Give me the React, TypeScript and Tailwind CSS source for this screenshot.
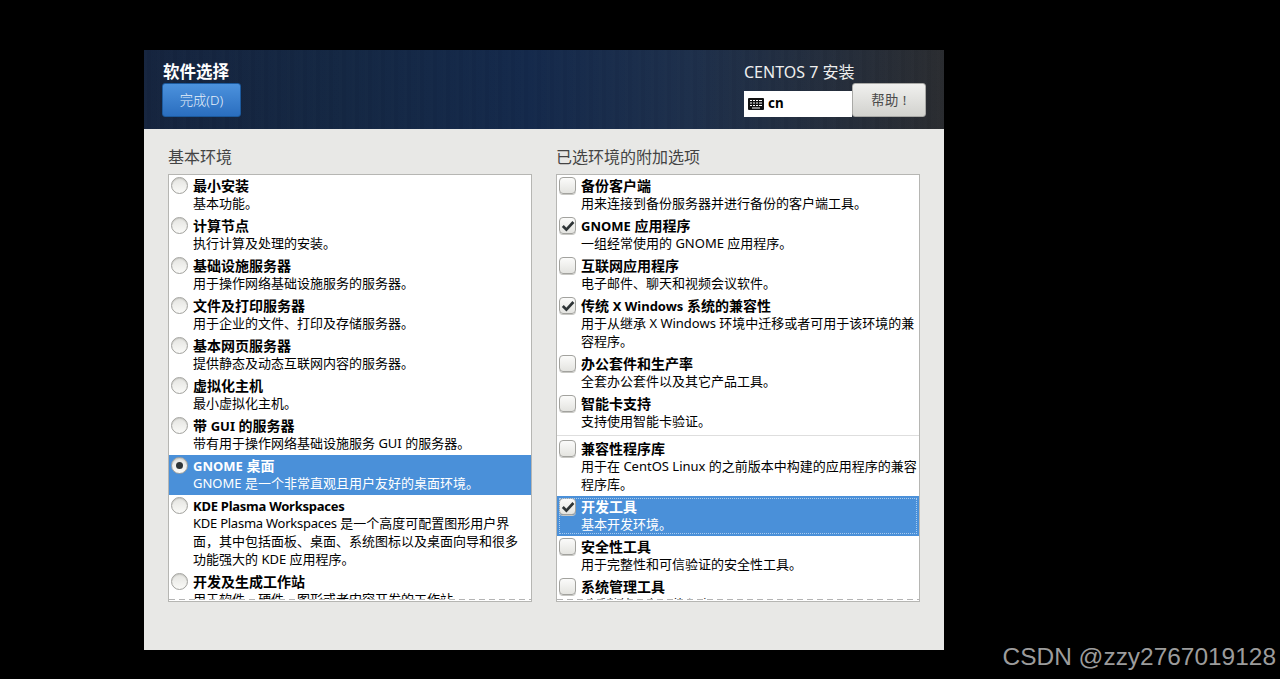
import React from "react";

const FONT = "font-['Noto_Sans','Noto_Sans_CJK_SC',sans-serif]";

type Row = { title: string; desc: string; checked?: boolean; selected?: boolean; focus?: boolean };

const envs: Row[] = [
  { title: "最小安装", desc: "基本功能。" },
  { title: "计算节点", desc: "执行计算及处理的安装。" },
  { title: "基础设施服务器", desc: "用于操作网络基础设施服务的服务器。" },
  { title: "文件及打印服务器", desc: "用于企业的文件、打印及存储服务器。" },
  { title: "基本网页服务器", desc: "提供静态及动态互联网内容的服务器。" },
  { title: "虚拟化主机", desc: "最小虚拟化主机。" },
  { title: "带 GUI 的服务器", desc: "带有用于操作网络基础设施服务 GUI 的服务器。" },
  { title: "GNOME 桌面", desc: "GNOME 是一个非常直观且用户友好的桌面环境。", checked: true, selected: true },
  { title: "KDE Plasma Workspaces", desc: "KDE Plasma Workspaces 是一个高度可配置图形用户界\n面，其中包括面板、桌面、系统图标以及桌面向导和很多\n功能强大的 KDE 应用程序。" },
  { title: "开发及生成工作站", desc: "用于软件、硬件、图形或者内容开发的工作站。" },
];

const addonsTop: Row[] = [
  { title: "备份客户端", desc: "用来连接到备份服务器并进行备份的客户端工具。" },
  { title: "GNOME 应用程序", desc: "一组经常使用的 GNOME 应用程序。", checked: true },
  { title: "互联网应用程序", desc: "电子邮件、聊天和视频会议软件。" },
  { title: "传统 X Windows 系统的兼容性", desc: "用于从继承 X Windows 环境中迁移或者可用于该环境的兼\n容程序。", checked: true },
  { title: "办公套件和生产率", desc: "全套办公套件以及其它产品工具。" },
  { title: "智能卡支持", desc: "支持使用智能卡验证。" },
];

const addonsBottom: Row[] = [
  { title: "兼容性程序库", desc: "用于在 CentOS Linux 的之前版本中构建的应用程序的兼容\n程序库。" },
  { title: "开发工具", desc: "基本开发环境。", checked: true, selected: true, focus: true },
  { title: "安全性工具", desc: "用于完整性和可信验证的安全性工具。" },
  { title: "系统管理工具", desc: "对系统管理有用的程序。" },
];

function Mixed({ text, heading }: { text: string; heading?: boolean }) {
  const parts = text.split(/([A-Za-z][A-Za-z ]*[A-Za-z]|[A-Z])/);
  return (
    <>
      {parts.map((part, i) => {
        if (i % 2 === 0) return part;
        const wide = part.includes("Plasma");
        const cls = heading
          ? wide
            ? "text-[13px] leading-none tracking-[-0.25px]"
            : "text-[13px] leading-none"
          : wide
            ? "text-[13px] leading-none tracking-[-0.25px]"
            : "text-[13px] leading-none";
        return (
          <span key={i} className={cls}>
            {part}
          </span>
        );
      })}
    </>
  );
}

function Radio({ on }: { on?: boolean }) {
  return (
    <span className="flex h-[17px] w-[17px] shrink-0 items-center justify-center rounded-full border border-[#a2a29e] bg-gradient-to-b from-[#e4e4e0] to-[#fafaf8] shadow-[inset_0_1px_1px_#c8c8c4]">
      {on && <span className="h-[7px] w-[7px] rounded-full bg-[#2e3436]" />}
    </span>
  );
}

function Check({ on }: { on?: boolean }) {
  return (
    <span className="flex h-[17px] w-[17px] shrink-0 items-center justify-center rounded-[4px] border border-[#a2a29e] bg-gradient-to-b from-[#fbfbfa] to-[#e4e4e0] shadow-[0_1px_0_#c8c8c4]">
      {on && (
        <svg viewBox="0 0 14 14" className="h-[14px] w-[14px]">
          <path d="M1.8 7 L5.4 10.6 L12.4 3" fill="none" stroke="#2e3436" strokeWidth="2.7" />
        </svg>
      )}
    </span>
  );
}

function ListRow({ row, kind }: { row: Row; kind: "radio" | "check" }) {
  const tone = row.selected ? "bg-[#4a90d9] text-white" : "text-black";
  return (
    <div className={`relative flex shrink-0 gap-[5px] pb-[3px] pl-[2px] pr-[2px] pt-[2px] leading-[18px] ${tone}`}>
      {kind === "radio" ? <Radio on={row.checked} /> : <Check on={row.checked} />}
      <div className="min-w-0 flex-1">
        <div className="text-[14px] font-bold leading-[17px]">
          <Mixed text={row.title} heading />
        </div>
        <div className="whitespace-pre">
          <Mixed text={row.desc} />
        </div>
      </div>
      {row.focus && (
        <span className="pointer-events-none absolute inset-[2px] border border-dotted border-[#a9cbee]" />
      )}
    </div>
  );
}

function ListBox({ children }: { children: React.ReactNode }) {
  return (
    <div className="relative flex h-[428px] flex-col overflow-hidden border border-[#b6b6b3] bg-white text-[13px]">
      {children}
      <span className="absolute inset-x-0 bottom-0 h-[2px] bg-white" />
      <span className="absolute inset-x-0 bottom-[1px] h-px bg-[repeating-linear-gradient(90deg,#b4b4b4_0,#b4b4b4_6px,transparent_6px,transparent_10px)]" />
    </div>
  );
}

export default function App() {
  return (
    <div className={`relative h-[679px] w-[1280px] overflow-hidden bg-black pl-[144px] pt-[50px] ${FONT}`}>
      <div className="flex h-[600px] w-[800px] flex-col bg-[#e8e8e6]">
        <header className="flex h-[79px] shrink-0 justify-between bg-[repeating-linear-gradient(90deg,rgba(255,255,255,0.008)_0,rgba(255,255,255,0.008)_3px,rgba(0,0,0,0.015)_3px,rgba(0,0,0,0.015)_7px,rgba(255,255,255,0.005)_7px,rgba(255,255,255,0.005)_13px),linear-gradient(90deg,#15243e_0%,#142743_25%,#14294b_48%,#1d2f4b_68%,#2a2c30_100%)] pl-[18px] pr-[18px] pt-[13px]">
          <div className="flex flex-col">
            <div className="h-[20px] pl-px text-[16.5px] font-bold leading-[18px] text-white">软件选择</div>
            <button className="flex h-[34px] w-[79px] items-center justify-center rounded-[3px] border border-[#1c5a9e] bg-gradient-to-b from-[#4c92dd] to-[#2a6ebf] pt-[2px] text-[13.33px] font-light text-[#e6f0fa]">
              完成(D)
            </button>
          </div>
          <div className="flex w-[182px] flex-col">
            <div className="h-[20px] text-[16px] leading-[18px] text-[#eeeeee]">CENTOS 7 安装</div>
            <div className="flex h-[34px] items-end">
              <div className="flex h-[26px] w-[108px] items-center gap-[4px] bg-white pl-[4px] text-[13.33px] font-bold text-black">
                <svg viewBox="0 0 16 12" className="h-[12px] w-[16px]">
                  <rect width="16" height="12" rx="1" fill="#111" />
                  <path d="M2 2.5h2M5 2.5h2M8 2.5h2M11 2.5h3M2 5h2M5 5h2M8 5h2M11 5h3M2 7.5h2M5 7.5h2M8 7.5h2M11 7.5h3M4 10h8" stroke="#fff" strokeWidth="1.2" fill="none" />
                </svg>
                cn
              </div>
              <button className="flex h-[34px] w-[74px] items-center justify-center rounded-[3px] border border-[#a9a9a6] bg-gradient-to-b from-[#f0f0ee] to-[#d2d2ce] pt-px text-[13.33px] tracking-[0.4px] text-[#4a4a4a]">
                帮助 !
              </button>
            </div>
          </div>
        </header>
        <main className="grid flex-1 grid-cols-2 gap-6 px-6 pt-[19px]">
          <section>
            <h2 className="mb-2 h-[18px] text-[16px] leading-[18px] text-[#444444]">基本环境</h2>
            <ListBox>
              {envs.map((r) => (
                <ListRow key={r.title} row={r} kind="radio" />
              ))}
            </ListBox>
          </section>
          <section>
            <h2 className="mb-2 h-[18px] text-[16px] leading-[18px] text-[#444444]">已选环境的附加选项</h2>
            <ListBox>
              {addonsTop.map((r) => (
                <ListRow key={r.title} row={r} kind="check" />
              ))}
              <div className="my-[2px] h-px shrink-0 bg-[#dedede]" />
              {addonsBottom.map((r) => (
                <ListRow key={r.title} row={r} kind="check" />
              ))}
            </ListBox>
          </section>
        </main>
      </div>
      <div className="absolute bottom-[8px] right-[4px] font-['Liberation_Sans',sans-serif] text-[24.45px] leading-[28px] text-[#9c9c9c]">
        CSDN @zzy2767019128
      </div>
    </div>
  );
}
